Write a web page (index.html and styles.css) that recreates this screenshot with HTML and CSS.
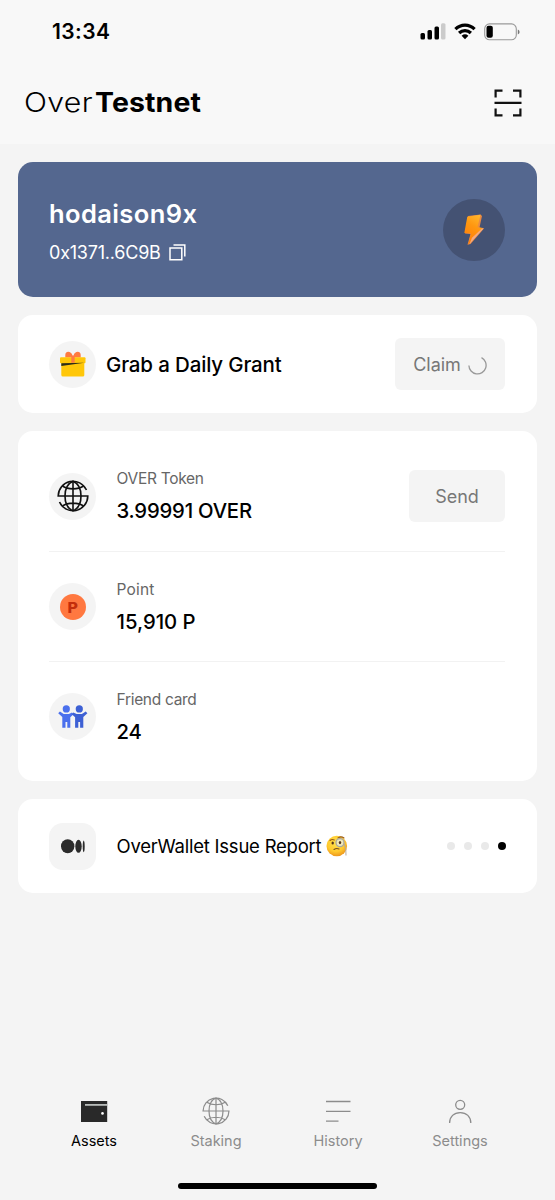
FILE: index.html
```html
<!DOCTYPE html>
<html lang="en">
<head>
<meta charset="utf-8">
<title>OverTestnet</title>
<link rel="stylesheet" href="styles.css">
</head>
<body>
<svg class="defs" width="0" height="0" aria-hidden="true">
  <symbol id="globe" viewBox="0 0 32 32">
    <g fill="none" stroke="currentColor">
      <path d="M29.500 10A14.800 14.800 0 0 0 1.200 16H30.800A14.800 14.800 0 0 1 2.500 22"/>
      <path d="M16 1.200V30.800M5.500 6C11 9.800 21 9.800 26.500 6M5.500 26C11 22.200 21 22.200 26.500 26"/>
      <path d="M16 1.200C10.500 3.500 8 9 8 16S10.500 28.500 16 30.800C21.500 28.500 24 23 24 16S21.500 3.500 16 1.200Z"/>
    </g>
  </symbol>
</svg>
<div class="app">
  <header class="top">
    <div class="status">
      <span class="time">13:34</span>
      <div class="indicators">
        <svg class="signal" width="26" height="17" viewBox="0 0 26 17">
          <rect x="0.500" y="10" width="4.500" height="6.500" rx="1.500"/>
          <rect x="7.500" y="7" width="4.500" height="9.500" rx="1.500"/>
          <rect x="14.500" y="3.500" width="4.500" height="13" rx="1.500"/>
          <rect x="21" y="0.300" width="4.500" height="16.200" rx="1.500" fill="#cbcbcb"/>
        </svg>
        <svg class="wifi" width="22" height="17" viewBox="0 0 22 17">
          <g fill="none" stroke="#000" stroke-width="3.200">
            <path d="M1.400 6.200C6.800 0.700 15.200 0.700 20.600 6.200"/>
            <path d="M5.100 10C8.500 6.700 13.500 6.700 16.900 10"/>
          </g>
          <path d="M7.600 12.700Q11 9.900 14.400 12.700L11 16.300Z"/>
        </svg>
        <svg class="battery" width="36" height="18" viewBox="0 0 36 18">
          <rect x="0.700" y="0.900" width="31.600" height="15.900" rx="4.800" fill="none" stroke="#999" stroke-width="1.100"/>
          <rect x="2.500" y="2.800" width="6.300" height="12" rx="2"/>
          <path d="M33.800 6.500Q35.600 7.200 35.600 8.900T33.800 11.400Z" fill="#777"/>
        </svg>
      </div>
    </div>
    <div class="brand-row">
      <h1 class="brand"><span class="brand-light">Over</span><span class="brand-bold">Testnet</span></h1>
      <svg class="scan" width="28" height="28" viewBox="0 0 28 28" fill="none" stroke="#111" stroke-width="2.200">
        <path d="M1.600 8.500V1.600H8.500M19 1.600H26.400V8.500M1.600 19.500V26.400H8.500M19 26.400H26.400V19.500M0.500 13.800H27.500"/>
      </svg>
    </div>
  </header>

  <main class="cards">
    <section class="card account">
      <div class="account-info">
        <div class="account-name">hodaison9x</div>
        <div class="account-address">
          <span class="address">0x1371..6C9B</span>
          <svg width="17" height="17" viewBox="0 0 17 17" fill="none" stroke="#fff" stroke-width="1.500">
            <path d="M1 3.900H12.800V15.800H1ZM4.500 1H15.800V12.500"/>
          </svg>
        </div>
      </div>
      <div class="bolt">
        <svg width="22" height="32" viewBox="0 0 22 32">
          <defs>
            <linearGradient id="boltFace" x1="0.700" y1="0" x2="0.300" y2="1">
              <stop offset="0" stop-color="#ffb52b"/><stop offset="0.400" stop-color="#ff9710"/><stop offset="1" stop-color="#ff7c08"/>
            </linearGradient>
          </defs>
          <path d="M5 2L17.500 0.500L19 2L16.500 13.500L21 14.500L7.500 30L4.500 30.800L7.500 20L2 19.500Z" fill="#e98a43"/>
          <path d="M4.300 2.800L17.500 0.800L14.500 13.200L20 14L5.200 30.500L8 19.300L1.300 18.900Z" fill="url(#boltFace)"/>
          <path d="M20.800 14.300L6.500 30L9 23.800L19 14.500Z" fill="#f4aa80"/>
        </svg>
      </div>
    </section>

    <section class="card grant">
      <div class="badge">
        <svg width="26" height="26" viewBox="0 0 26 26">
          <path d="M5.300 6.500V4C5.300 -0.400 11.200 -0.300 12.500 4.500H13.500C14.800 -0.300 20.700 -0.400 20.700 4V6.500Z" fill="#ff7b40"/>
          <rect x="0" y="6.300" width="25.500" height="6" rx="1" fill="#ffc709"/>
          <path d="M1.300 12H24.300V24Q24.300 25.500 22.800 25.500H2.800Q1.300 25.500 1.300 24Z" fill="#ffc709"/>
          <path d="M11.300 5H14.700V11.500L11.300 12Z" fill="#ff7b40"/>
          <path d="M1.300 12.200L24.300 11.800L1.300 15Z" fill="#2d2d18"/>
        </svg>
      </div>
      <span class="grant-title">Grab a Daily Grant</span>
      <button class="button claim"><span>Claim</span>
        <svg width="19" height="19" viewBox="0 0 19 19" fill="none" stroke="#999" stroke-width="1.300"><path d="M13.500 1.700A8.600 8.600 0 1 1 0.900 9.500"/></svg>
      </button>
    </section>

    <section class="card assets">
      <div class="asset">
        <div class="badge"><svg class="globe-dark" width="32" height="32"><use href="#globe"/></svg></div>
        <div class="asset-text"><span class="label">OVER Token</span><span class="value">3.99991 OVER</span></div>
        <button class="button send">Send</button>
      </div>
      <div class="asset">
        <div class="badge"><span class="coin"><span class="coin-letter">P</span></span></div>
        <div class="asset-text"><span class="label point">Point</span><span class="value points">15,910 P</span></div>
      </div>
      <div class="asset">
        <div class="badge">
          <svg width="30" height="24" viewBox="0 0 30 24">
            <g fill="#4b70ed">
              <circle cx="8.300" cy="3.900" r="3.600"/>
              <path d="M0.200 8.300L1.900 6.500L5.700 9.100H10.900L14 7.500L15.500 9.200L12.300 12.300V22.800H9.300V17H7.500V22.800H4.300V12Z"/>
            </g>
            <g fill="#3d60d4">
              <circle cx="21.300" cy="3.900" r="3.600"/>
              <path d="M13.800 9.200L15.300 7.500L18.700 9.100H23.900L27.700 6.500L29.400 8.300L25.300 12V22.800H22.100V17H20.300V22.800H17.100V12.300Z"/>
            </g>
          </svg>
        </div>
        <div class="asset-text"><span class="label">Friend card</span><span class="value">24</span></div>
      </div>
    </section>

    <section class="card report">
      <div class="badge square">
        <svg width="24" height="15" viewBox="0 0 24 15" fill="#2b2b2b"><ellipse cx="6.700" cy="7.300" rx="6.700" ry="7"/><ellipse cx="17.500" cy="7.300" rx="3.200" ry="6.500"/><ellipse cx="22.700" cy="7.300" rx="1" ry="5.900"/></svg>
      </div>
      <span class="report-title">OverWallet Issue Report</span>
      <svg class="emoji" width="22" height="22" viewBox="0 0 22 22">
        <defs><radialGradient id="faceFill" cx="0.450" cy="0.350" r="0.650"><stop offset="0" stop-color="#ffe34d"/><stop offset="0.650" stop-color="#ffc92e"/><stop offset="1" stop-color="#ed971d"/></radialGradient></defs>
        <circle cx="10.800" cy="11" r="10.300" fill="url(#faceFill)"/>
        <path d="M4 5.500Q6 3.900 8.300 5M12 3Q15 0.800 18 3" fill="none" stroke="#9b5b16" stroke-width="1.100" stroke-linecap="round"/>
        <ellipse cx="6.700" cy="8" rx="1.200" ry="1.600" fill="#54351c"/>
        <circle cx="14" cy="7.600" r="4" fill="#f1e9b9" stroke="#a9a9a2" stroke-width="1.300"/>
        <ellipse cx="14" cy="7.600" rx="1.200" ry="1.600" fill="#54351c"/>
        <path d="M8 14.500Q10.500 12.800 13 14" fill="none" stroke="#795022" stroke-width="1.100" stroke-linecap="round"/>
        <path d="M18 8.500Q20.500 13 20 20.500" fill="none" stroke="#b6ab9c" stroke-width="1"/>
      </svg>
      <div class="dots"><i></i><i></i><i></i><i class="active"></i></div>
    </section>
  </main>

  <nav class="tabs">
    <a class="tab active">
      <svg width="28" height="28" viewBox="0 0 28 28"><rect x="1" y="4" width="26.200" height="21" fill="#292929"/><path d="M5 7.900H27.200" stroke="#b8bcba" stroke-width="1.800"/><circle cx="22.500" cy="16.400" r="1.300" fill="#fff"/></svg>
      <span>Assets</span>
    </a>
    <a class="tab">
      <svg class="globe-light" width="28" height="28"><use href="#globe"/></svg>
      <span>Staking</span>
    </a>
    <a class="tab">
      <svg width="28" height="28" viewBox="0 0 28 28" stroke="#8c8c8c" stroke-width="1.300"><path d="M2 4.500H26.500M2 14.300H26.500M2 24.200H14.500"/></svg>
      <span>History</span>
    </a>
    <a class="tab">
      <svg width="28" height="28" viewBox="0 0 28 28" fill="none" stroke="#8c8c8c" stroke-width="1.300"><circle cx="14.200" cy="7.800" r="4.500"/><path d="M3.600 26C3.600 19.500 8 15.600 14.200 15.600S24.800 19.500 24.800 26"/></svg>
      <span>Settings</span>
    </a>
  </nav>
  <div class="home-indicator"></div>
</div>
</body>
</html>
```
FILE: styles.css
```css
* { box-sizing: border-box; }
body { margin: 0; background: #f4f4f4; color: #000; font-family: Inter, "Liberation Sans", sans-serif; }
svg { display: block; flex: none; }
.defs { position: absolute; }
.app { width: 555px; height: 1200px; display: flex; flex-direction: column; }
span, h1 { white-space: nowrap; }

.top { height: 144px; background: #f8f8f8; }
.status { height: 63px; padding: 0 35px 0 52px; display: flex; align-items: center; justify-content: space-between; }
.time { font-size: 21px; font-weight: 600; letter-spacing: 0.4px; }
.indicators { display: flex; align-items: center; gap: 8px; }
.brand-row { height: 79px; padding: 0 33px 0 24px; display: flex; align-items: center; justify-content: space-between; }
.brand { margin: 0; padding-top: 1px; font-size: 27px; line-height: 34px; display: flex; }
.brand-light { width: 71px; font-weight: 330; letter-spacing: 0.3px; transform: scaleX(1.12); transform-origin: left; }
.brand-bold { font-weight: 700; letter-spacing: 0.1px; transform: scaleX(1.055); transform-origin: left; }

.cards { padding: 18px; display: flex; flex-direction: column; gap: 18px; }
.card { background: #fff; border-radius: 15px; display: flex; align-items: center; padding: 0 32px 0 31px; }
.badge { flex: none; width: 47px; height: 47px; border-radius: 50%; background: #f4f4f4; display: flex; align-items: center; justify-content: center; }
.badge.square { border-radius: 14px; }
.button { border: 0; border-radius: 6px; background: #f4f4f4; color: #777; font: 400 18px/24px Inter, "Liberation Sans", sans-serif; height: 52px; margin-left: auto; padding: 2px 0 0; display: flex; align-items: center; justify-content: center; }

.account { height: 135px; background: #54678f; color: #fff; justify-content: space-between; }
.account-info { padding-top: 4px; display: flex; flex-direction: column; gap: 10px; }
.account-name { font-size: 25.5px; line-height: 32px; font-weight: 570; letter-spacing: 0.4px; }
.account-address { display: flex; align-items: center; gap: 8px; font-size: 18px; line-height: 26px; letter-spacing: -0.22px; }
.bolt { width: 62px; height: 62px; border-radius: 50%; background: #445273; display: flex; align-items: center; justify-content: center; }

.grant { height: 98px; }
.grant-title { margin-left: 10px; font-size: 20.5px; font-weight: 500; letter-spacing: -0.15px; }
.claim { width: 110px; gap: 7px; }

.assets { height: 350px; padding-top: 10px; padding-bottom: 10px; flex-direction: column; align-items: stretch; }
.asset { height: 110px; display: flex; align-items: center; }
.asset + .asset { border-top: 1px solid #f2f2f2; }
.asset-text { margin-left: 20.5px; display: flex; flex-direction: column; gap: 6px; }
.label { color: #666; font-size: 15.5px; line-height: 24px; letter-spacing: -0.3px; }
.point { letter-spacing: 0.2px; }
.value { font-size: 20.3px; line-height: 28px; font-weight: 550; letter-spacing: -0.2px; }
.points { letter-spacing: 0; }
.send { width: 96px; }
.coin { width: 26px; height: 26px; border-radius: 50%; background: #ff7840; color: #c32e0b; font-size: 14.5px; line-height: 27px; font-weight: 800; text-align: center; }
.coin-letter { display: inline-block; transform: scaleX(1.1); }
.globe-dark { color: #111; stroke-width: 1.6; }
.globe-light { color: #8c8c8c; stroke-width: 1.4; }

.report { height: 94px; padding-right: 31px; }
.report-title { margin-left: 20.5px; padding-bottom: 1px; font-size: 18.5px; letter-spacing: -0.23px; }
.emoji { margin-left: 5px; }
.dots { margin-left: auto; display: flex; gap: 9px; }
.dots i { width: 8px; height: 8px; border-radius: 50%; background: #e9e9e9; }
.dots .active { background: #000; }

.tabs { margin-top: auto; padding: 0 34px 0 33px; display: grid; grid-template-columns: repeat(4, 1fr); }
.tab { display: flex; flex-direction: column; align-items: center; gap: 6px; color: #8c8c8c; font-size: 14.5px; line-height: 20px; }
.tab.active { color: #000; }
.home-indicator { flex: none; width: 199px; height: 6px; border-radius: 3px; background: #000; margin: 32px auto 11px; }
```
